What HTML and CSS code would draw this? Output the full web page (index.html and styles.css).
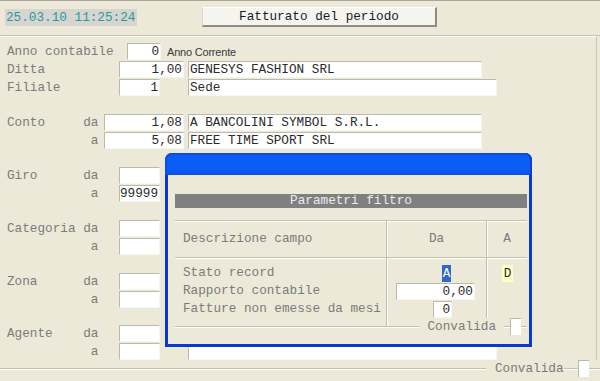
FILE: index.html
```html
<!DOCTYPE html>
<html>
<head>
<meta charset="utf-8">
<link rel="stylesheet" href="styles.css">
</head>
<body>
<header class="top">
  <div class="clock">25.03.10 11:25:24</div>
  <div class="btn">Fatturato del periodo</div>
</header>
<main class="form">
  <div class="row"><span class="lab">Anno contabile</span><span class="fld num w-anno">0</span><span class="note">Anno Corrente</span></div>
  <div class="row"><span class="lab">Ditta</span><span class="fld num w-ditta">1,00</span><span class="fld txt w-long">GENESYS FASHION SRL</span></div>
  <div class="row"><span class="lab">Filiale</span><span class="fld num w-code">1</span><span class="fld txt w-wide">Sede</span></div>

  <div class="row grp"><span class="lab">Conto     da</span><span class="fld num w-conto">1,08</span><span class="fld txt w-long">A BANCOLINI SYMBOL S.R.L.</span></div>
  <div class="row"><span class="lab">           a</span><span class="fld num w-conto">5,08</span><span class="fld txt w-long">FREE TIME SPORT SRL</span></div>

  <div class="row grp"><span class="lab">Giro      da</span><span class="fld num w-code"></span><span class="fld txt w-wide"></span></div>
  <div class="row"><span class="lab">           a</span><span class="fld num w-code">99999</span><span class="fld txt w-wide"></span></div>

  <div class="row grp"><span class="lab">Categoria da</span><span class="fld num w-code"></span><span class="fld txt w-wide"></span></div>
  <div class="row"><span class="lab">           a</span><span class="fld num w-code"></span><span class="fld txt w-wide"></span></div>

  <div class="row grp"><span class="lab">Zona      da</span><span class="fld num w-code"></span><span class="fld txt w-wide"></span></div>
  <div class="row"><span class="lab">           a</span><span class="fld num w-code"></span><span class="fld txt w-wide"></span></div>

  <div class="row grp-last"><span class="lab">Agente    da</span><span class="fld num w-code"></span><span class="fld txt w-wide"></span></div>
  <div class="row"><span class="lab">           a</span><span class="fld num w-code"></span><span class="fld txt w-wide"></span></div>
</main>
<footer class="foot">
  <span class="eline grow"></span>
  <span class="foot-txt">Convalida</span>
  <span class="eline seg14"></span>
  <span class="chk"></span>
  <span class="eline seg11"></span>
</footer>

<section class="dlg">
  <div class="dlg-title"></div>
  <div class="dlg-body">
    <div class="bar">Parametri filtro</div>
    <div class="tbl">
      <div class="thead">
        <div class="c1 hcell">Descrizione campo</div>
        <div class="c2 hcell center">Da</div>
        <div class="c3 hcell center">A</div>
      </div>
      <div class="tbody">
        <div class="c1 bcol">
          <div class="brow">Stato record</div>
          <div class="brow">Rapporto contabile</div>
          <div class="brow">Fatture non emesse da mesi</div>
        </div>
        <div class="c2 bcol">
          <div class="brow"><span class="sel">A</span></div>
          <div class="brow"><span class="fld num w-rapp">0,00</span></div>
          <div class="brow"><span class="fld num w-mesi">0</span></div>
        </div>
        <div class="c3 bcol">
          <div class="brow"><span class="yel">D</span></div>
        </div>
      </div>
      <div class="cv">
        <span class="eline grow"></span>
        <span class="cv-txt">Convalida</span>
        <span class="eline seg6"></span>
        <span class="chk"></span>
        <span class="eline seg6"></span>
      </div>
    </div>
  </div>
</section>
</body>
</html>
```
FILE: styles.css
```css
html, body {
  margin: 0;
  padding: 0;
}
body {
  position: relative;
  width: 600px;
  height: 381px;
  overflow: hidden;
  background: #ece9d8;
  font-family: "Liberation Mono", "DejaVu Sans Mono", monospace;
  font-size: 12.7px;
  color: #7b7b7b;
}

/* top bar */
.top {
  display: flex;
  align-items: flex-start;
  height: 34px;
  border-top: 1px solid #a9a696;
  border-bottom: 1px solid #c4c1b1;
}
.clock {
  margin: 8px 0 0 5px;
  width: 132px;
  height: 17px;
  line-height: 17px;
  box-sizing: border-box;
  padding-left: 1px;
  background: #d7d5d0;
  color: #2c9a9a;
}
.btn {
  margin: 6px 0 0 65px;
  width: 235px;
  height: 20px;
  box-sizing: border-box;
  background: #f5f4ef;
  border-style: solid;
  border-width: 1px 2px 2px 1px;
  border-color: #ffffff #8f8d83 #8f8d83 #dcdad0;
  color: #1a1a1a;
  text-align: center;
  line-height: 17px;
}

/* form */
.form {
  width: 597px;
  height: 324px;
  box-sizing: border-box;
  border-top: 1px solid #ffffff;
  border-right: 1px solid #cac7b8;
  padding-top: 6px;
}
.row {
  display: flex;
  align-items: flex-start;
  height: 18px;
  padding-left: 7px;
}
.grp { margin-top: 17px; }
.grp-last { margin-top: 16px; }
.lab {
  width: 97px;
  white-space: pre;
  line-height: 17px;
}
.fld {
  display: block;
  height: 17px;
  box-sizing: border-box;
  background: #ffffff;
  border: 1px solid;
  border-color: #bdbaac #f7f6f0 #f7f6f0 #bdbaac;
  line-height: 15px;
  color: #2a2a2a;
  white-space: pre;
  overflow: hidden;
}
.num { text-align: right; padding: 0 1px 0 0; }
.txt { text-align: left; padding: 0 0 0 1px; }
.w-anno { margin-left: 23px; width: 34px; }
.w-ditta { margin-left: 15px; width: 65px; }
.w-code { margin-left: 15px; width: 41px; }
.w-conto { margin-left: 0; width: 80px; }
.w-long { margin-left: 4px; width: 294px; }
.w-wide { margin-left: 28px; width: 309px; }
.note {
  margin-left: 6px;
  font-family: "Liberation Sans", Arial, sans-serif;
  font-size: 11px;
  line-height: 19px;
  color: #3a3a3a;
  letter-spacing: -0.2px;
}

/* etched lines */
.eline {
  display: block;
  height: 2px;
  box-sizing: border-box;
  border-top: 1px solid #c2bfaf;
  border-bottom: 1px solid #ffffff;
}
.grow { flex: 1; }
.seg14 { width: 14px; }
.seg11 { width: 11px; }
.seg6 { width: 6px; }
.chk {
  display: block;
  width: 11px;
  height: 17px;
  box-sizing: border-box;
  background: #ffffff;
  border-left: 1px solid #bdbaac;
  border-top: 1px solid #bdbaac;
}

/* footer */
.foot {
  display: flex;
  align-items: center;
  height: 17px;
}
.foot-txt {
  padding-left: 9px;
  line-height: 17px;
  width: 69px;
}

/* dialog */
.dlg {
  position: absolute;
  left: 165px;
  top: 153px;
  width: 367px;
  height: 194px;
  box-sizing: border-box;
  border: 3px solid #0838d0;
  border-top: 0;
  border-radius: 7px 7px 0 0;
  background: #ece9d8;
}
.dlg-title {
  height: 22px;
  margin: 0 -3px;
  border-radius: 7px 7px 0 0;
  background: linear-gradient(#0a48da 0, #0a5cf2 3px, #0a5ef5 15px, #0b57ec 20px, #0a4de0 22px);
  box-shadow: inset -2px 0 0 #0a3fd0, inset 2px 0 0 #0a4fe6;
}
.dlg-body {
  padding: 19px 2px 0 7px;
}
.bar {
  height: 14px;
  line-height: 14px;
  background: #808080;
  color: #ececec;
  text-align: center;
}
.tbl {
  margin-top: 12px;
  border-top: 1px solid #c2bfaf;
  box-shadow: inset 0 1px 0 #ffffff;
}
.thead, .tbody {
  display: grid;
  grid-template-columns: 211px 100px 41px;
}
.thead {
  height: 36px;
  border-bottom: 1px solid #c2bfaf;
}
.hcell {
  line-height: 33px;
  padding-top: 1px;
}
.thead .c1 { padding-left: 8px; }
.center { text-align: center; }
.c2, .c3 {
  border-left: 1px solid #c2bfaf;
  box-shadow: inset 1px 0 0 #ffffff;
}
.tbody {
  height: 69px;
  box-shadow: inset 0 1px 0 #ffffff;
}
.bcol {
  padding-top: 7px;
}
.brow {
  height: 18px;
  line-height: 16px;
  display: flex;
  align-items: flex-start;
}
.c1 .brow { padding-left: 8px; white-space: pre; }
.sel {
  display: block;
  margin-left: 55px;
  width: 9px;
  height: 17px;
  line-height: 17px;
  background: #3168c8;
  color: #ffffff;
  text-align: center;
  overflow: hidden;
}
.w-rapp { margin-left: 9px; width: 79px; }
.w-mesi { margin-left: 46px; width: 19px; }
.yel {
  display: block;
  margin-left: 15px;
  width: 11px;
  height: 17px;
  line-height: 17px;
  background: #ffffc4;
  color: #2a2a2a;
  text-align: center;
}
.cv {
  display: flex;
  align-items: center;
  height: 17px;
  margin-top: -9px;
  position: relative;
}
.cv-txt {
  padding: 0 8px;
  line-height: 17px;
  background: #ece9d8;
}
```
